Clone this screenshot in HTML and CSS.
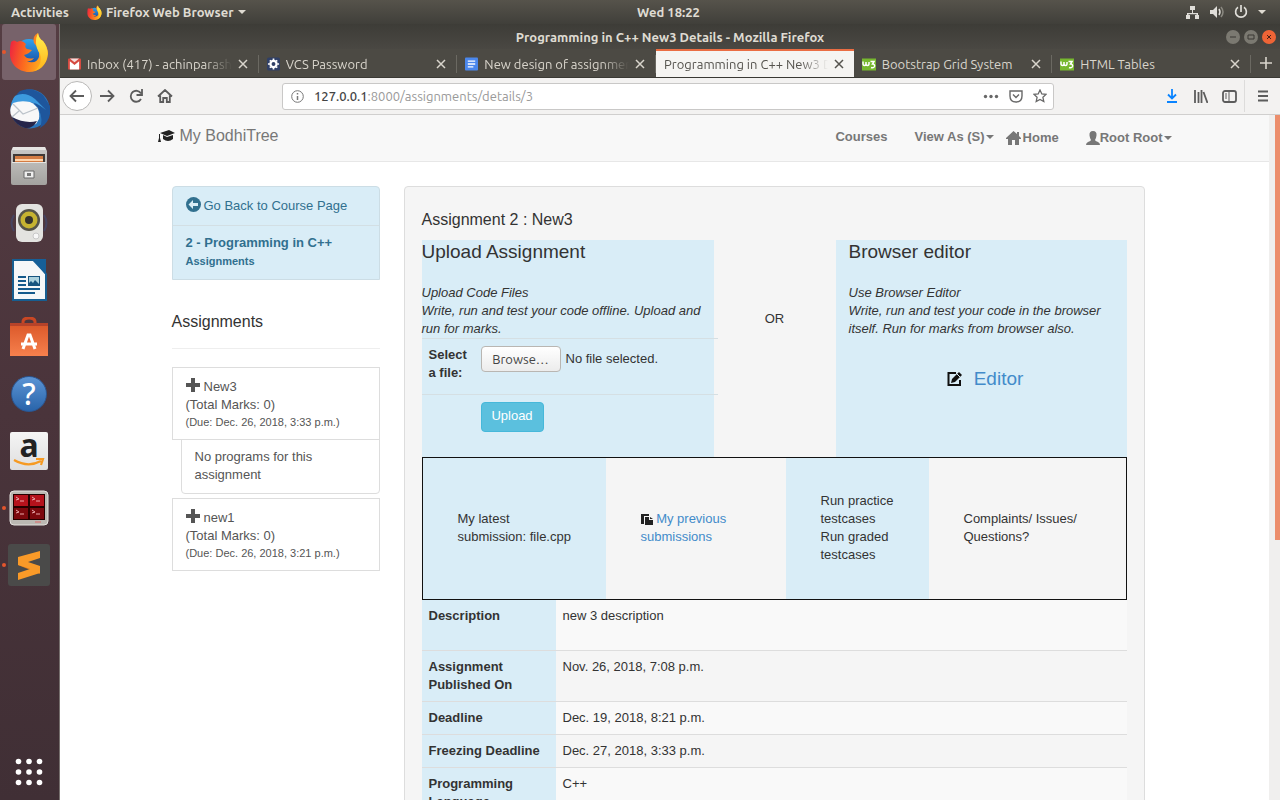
FILE: index.html
```html
<!DOCTYPE html>
<html lang="en">
<head>
<meta charset="utf-8">
<title>Programming in C++ New3 Details - Mozilla Firefox</title>
<link rel="stylesheet" href="styles.css">
</head>
<body>
<svg class="defs" aria-hidden="true">
  <defs>
    <linearGradient id="fire" x1="0" y1=".3" x2="1" y2=".5"><stop offset="0" stop-color="#ee2440"/><stop offset=".4" stop-color="#fb6520"/><stop offset="1" stop-color="#ffbf1c"/></linearGradient>
    <linearGradient id="flame" x1="0" y1="0" x2="0" y2="1"><stop offset="0" stop-color="#fff050"/><stop offset="1" stop-color="#ffb31a"/></linearGradient>
    <linearGradient id="blue" x1="0" y1="0" x2="0" y2="1"><stop offset="0" stop-color="#2fa2ed"/><stop offset="1" stop-color="#18469c"/></linearGradient>
    <linearGradient id="silver" x1="0" y1="0" x2="0" y2="1"><stop offset="0" stop-color="#cbcac8"/><stop offset="1" stop-color="#a3a29f"/></linearGradient>
    <linearGradient id="orange" x1="0" y1="0" x2="0" y2="1"><stop offset="0" stop-color="#dd5b2c"/><stop offset="1" stop-color="#f6804d"/></linearGradient>
    <symbol id="firefox" viewBox="0 0 40 40">
      <circle cx="20" cy="21" r="14" fill="url(#blue)"/>
      <path d="M2 10Q5 7 8 10Q13 7 17 12Q15 15 18 17L23 18Q20 22 15 23Q18 28 25 26Q22 30 17 29Q27 33 30 25Q31 17 25 11Q23 4 29 1Q30 7 34 9Q39 15 39 22C38 33 30 40 20 40C9 40 0 31 1 20Q1 14 2 10Z" fill="url(#fire)"/>
      <path d="M29 1Q30 7 34 9Q41 18 37 29Q33 37 25 39Q34 33 31 22Q24 12 29 1Z" fill="url(#flame)"/>
    </symbol>
    <symbol id="w3" viewBox="0 0 14 14"><path fill="#77b82f" d="M0 1h14v12H0z"/><path d="M1 4v2q0 2 1.500 2T4 6V4.500V6q0 2 1.500 2T7 6V4.500M8.500 4H12L10.500 6.500Q13 6.500 12.500 9Q11.500 11 9 10" fill="none" stroke="#fff" stroke-width="1.500"/></symbol>
    <symbol id="x" viewBox="0 0 10 10"><path d="M1 1l8 8M9 1L1 9" stroke="currentColor" stroke-width="1.500" fill="none"/></symbol>
    <symbol id="plus" viewBox="0 0 14 14"><path d="M5 0h4v5h5v4H9v5H5V9H0V5h5z" fill="currentColor"/></symbol>
  </defs>
</svg>

<header class="topbar">
  <div class="topbar-left">
    <span>Activities</span>
    <span class="app-menu"><svg width="15" height="15"><use href="#firefox"/></svg>Firefox Web Browser <i class="caret"></i></span>
  </div>
  <time>Wed 18:22</time>
  <div class="topbar-right">
    <svg width="15" height="15" viewBox="0 0 15 15" fill="#e0ded9"><path d="M5 1h5v4H8v3h5v2h1v4h-4v-4h1.500v-.8h-8V10H5v4H1v-4h1V8h5V5H5z"/></svg>
    <svg width="14" height="14" viewBox="0 0 14 14"><path d="M0 5h3l4-4v12L3 9H0z" fill="#e0ded9"/><path d="M9 4q2 3 0 6" stroke="#e0ded9" stroke-width="1.500" fill="none"/><path d="M11 2q4 5 0 10" stroke="#8a8880" stroke-width="1.500" fill="none"/></svg>
    <svg width="14" height="14" viewBox="0 0 14 14" fill="none" stroke="#e0ded9" stroke-width="1.700"><path d="M4 2.300a5.400 5.400 0 1 0 6 0M7 0v7"/></svg>
    <i class="caret"></i>
  </div>
</header>

<div class="desktop">
  <nav class="dock" aria-label="Dock">
    <a href="#" class="dock-item running current" aria-label="Firefox"><svg width="40" height="40"><use href="#firefox"/></svg></a>
    <a href="#" class="dock-item" aria-label="Thunderbird"><svg width="42" height="42" viewBox="0 0 42 42"><circle cx="22" cy="21" r="19.500" fill="#2a76bd"/><path d="M12 3Q24-2 35 7L42 18Q44 33 32 40Q37 26 25 14Q19 8 8 9Q9 5 12 3Z" fill="#1e569c"/><path d="M7 8Q17 3 27 11L38 22Q27 12 14 14Q7 16 3 22Q3 12 7 8Z" fill="#3c9ade"/><path d="M5 15Q13 12 22 14Q33 19 31 31L28 36Q18 40 4 29Q0 22 5 15Z" fill="#f8f8f8"/><path d="M5 16L15 26L30 20M4 29L11 23" fill="none" stroke="#bcc3ca" stroke-width="1.300"/><path d="M4 29Q17 36 29 33Q25 41 17 40Q8 37 4 29Z" fill="#26254a"/></svg></a>
    <a href="#" class="dock-item" aria-label="Files"><svg width="38" height="40" viewBox="0 0 38 40"><path d="M3 1h32l2 4v32q0 2-2 2H3q-2 0-2-2V5z" fill="url(#silver)"/><path d="M3 1h32l1 3H2z" fill="#e6e5e3"/><path d="M3 8h32v9H3z" fill="#413b38"/><path d="M5 10h28v7H5z" fill="#d47c43"/><path d="M5 13h28v2H5z" fill="#ffd5ac"/><path d="M2 16h34v1H2z" fill="#e6e5e3"/><path d="M14 25h10v7H14z" fill="#eee" stroke="#686868"/><path d="M17 27h4v3h-4z" fill="#777"/></svg></a>
    <a href="#" class="dock-item" aria-label="Rhythmbox"><svg width="40" height="40" viewBox="0 0 40 40"><path d="M5 12Q0 20 5 28M35 12Q40 20 35 28" stroke="#464460" stroke-width="2" fill="none"/><rect x="7" y="1" width="27" height="38" rx="6" fill="#e3e3e0"/><circle cx="20" cy="17" r="11" fill="#55544a"/><circle cx="20" cy="17" r="8.500" fill="#c5b331"/><circle cx="20" cy="17" r="4" fill="#34332d"/><circle cx="27" cy="33" r="3" fill="#f7f7f7" stroke="#c8c8c8"/></svg></a>
    <a href="#" class="dock-item" aria-label="LibreOffice Writer"><svg width="36" height="42" viewBox="0 0 36 42"><path d="M2 1h22l11 14v26H2z" fill="#f6f7f8" stroke="#175e91" stroke-width="2"/><path d="M20 0h15v16z" fill="#165f98"/><path d="M7 17h8v2H7zm0 4h8v2H7zm0 4h8v2H7zm0 4h22v2H7zm0 4h17v2H7z" fill="#155a8c"/><path d="M17 17h12v10H17z" fill="#17547f"/><path d="M18 18h10v7l-4-4-2 3-2-2-2 2z" fill="#acd1dd"/></svg></a>
    <a href="#" class="dock-item" aria-label="Ubuntu Software"><svg width="38" height="40" viewBox="0 0 38 40"><path d="M13 9V5q0-4 6-4t6 4v4" fill="none" stroke="#c94724" stroke-width="3"/><path d="M0 6h38v4H0z" fill="#b6432a"/><path d="M0 9h38v30H0z" fill="url(#orange)"/><path d="M13 32l5-14h2l5 14M11 27h16" stroke="#fff" stroke-width="3" fill="none"/></svg></a>
    <a href="#" class="dock-item help" aria-label="Help"><span>?</span></a>
    <a href="#" class="dock-item amazon" aria-label="Amazon"><span>a<svg width="32" height="10" viewBox="0 0 32 10"><path d="M1 2Q15 10 28 3M23 1l7 0-2 6" fill="none" stroke="#f69a22" stroke-width="2.200"/></svg></span></a>
    <a href="#" class="dock-item running" aria-label="Terminator"><svg width="40" height="36" viewBox="0 0 40 36"><rect x="1" y="1" width="38" height="34" rx="4" fill="#bbb8b2" stroke="#e4e2de"/><path d="M4 4h32v26H4z" fill="#260000"/><path d="M5 5h14v11H5zm16 0h14v11H21z" fill="#b5121c"/><path d="M5 18h14v11H5zm16 0h14v11H21z" fill="#7c080d"/><path d="M7 7l3 2-3 1M11 11h4M23 7l3 2-3 1M27 11h4M7 20l3 2-3 1M11 24h4M23 20l3 2-3 1M27 24h4" fill="none" stroke="#e9a9ab"/><path d="M26 32h6" stroke="#d66"/></svg></a>
    <a href="#" class="dock-item running" aria-label="Sublime Text"><svg width="42" height="42" viewBox="0 0 42 42"><rect width="42" height="42" rx="3" fill="#4a4a49"/><path d="M10 21l9-2 13 5v6z" fill="#ce7119"/><path d="M10 13L32 7v7l-12 4 12 4v7L10 36v-7l12-4-12-4z" fill="#f99a28"/></svg></a>
    <a href="#" class="dock-item apps" aria-label="Show Applications"><svg width="28" height="28" viewBox="0 0 28 28" fill="#fff"><circle cx="3.500" cy="3.500" r="2.800"/><circle cx="14" cy="3.500" r="2.800"/><circle cx="24.500" cy="3.500" r="2.800"/><circle cx="3.500" cy="14" r="2.800"/><circle cx="14" cy="14" r="2.800"/><circle cx="24.500" cy="14" r="2.800"/><circle cx="3.500" cy="24.500" r="2.800"/><circle cx="14" cy="24.500" r="2.800"/><circle cx="24.500" cy="24.500" r="2.800"/></svg></a>
  </nav>

  <div class="window">
    <div class="titlebar">
      <span class="title">Programming in C++ New3 Details - Mozilla Firefox</span>
      <div class="window-buttons">
        <button aria-label="Minimize"><svg width="8" height="8" viewBox="0 0 8 8"><path d="M1 4h6" stroke="#3a3935"/></svg></button>
        <button aria-label="Maximize"><svg width="8" height="8" viewBox="0 0 8 8"><path d="M1 2h6v4H1z" stroke="#3a3935" fill="none"/></svg></button>
        <button class="close" aria-label="Close"><svg width="8" height="8" viewBox="0 0 8 8"><path d="M2 2l4 4M6 2L2 6" stroke="#4b2015"/></svg></button>
      </div>
    </div>
    <div class="tabs">
      <div class="tab"><svg width="13" height="14" viewBox="0 0 14 14"><rect y="1" width="14" height="12" rx="1" fill="#d64a40"/><path d="M2 13V4l5 4 5-4v9z" fill="#fff"/><path d="M2 1h10L7 5z" fill="#f4dedc"/></svg><span class="label">Inbox (417) - achinparashar</span><button aria-label="Close tab"><svg width="10" height="10"><use href="#x"/></svg></button></div>
      <div class="tab"><svg width="13" height="14" viewBox="0 0 14 14"><rect width="14" height="14" rx="2" fill="#2f3f66"/><circle cx="7" cy="7" r="3.300" fill="none" stroke="#fff" stroke-width="2.400"/><path d="M7 1v2M7 11v2M1 7h2M11 7h2M3 3l1 1M10 10l1 1M11 3l-1 1M3 11l1-1" stroke="#fff" stroke-width="1.800"/></svg><span class="label">VCS Password</span><button aria-label="Close tab"><svg width="10" height="10"><use href="#x"/></svg></button></div>
      <div class="tab"><svg width="13" height="14" viewBox="0 0 14 14"><rect width="14" height="14" rx="1" fill="#4b87ec"/><path d="M3 4h8M3 7h8M3 10h6" stroke="#fff" stroke-width="1.400"/></svg><span class="label">New design of assignments</span><button aria-label="Close tab"><svg width="10" height="10"><use href="#x"/></svg></button></div>
      <div class="tab active"><span class="label">Programming in C++ New3 Details</span><button aria-label="Close tab"><svg width="10" height="10"><use href="#x"/></svg></button></div>
      <div class="tab"><svg width="14" height="15"><use href="#w3"/></svg><span class="label short">Bootstrap Grid System</span><button aria-label="Close tab"><svg width="10" height="10"><use href="#x"/></svg></button></div>
      <div class="tab"><svg width="14" height="15"><use href="#w3"/></svg><span class="label short">HTML Tables</span><button aria-label="Close tab"><svg width="10" height="10"><use href="#x"/></svg></button></div>
      <button class="new-tab" aria-label="New tab"><svg width="12" height="12" viewBox="0 0 12 12"><path d="M6 0v12M0 6h12" stroke="currentColor" stroke-width="1.600"/></svg></button>
    </div>
    <div class="toolbar">
      <div class="tools nav-tools">
        <button class="back" aria-label="Back"><svg width="16" height="14" viewBox="0 0 16 14"><path d="M15 7H2M7 1.500L1.500 7L7 12.500"/></svg></button>
        <button aria-label="Forward"><svg width="16" height="14" viewBox="0 0 16 14"><path d="M1 7h13M9 1.500L14.500 7L9 12.500"/></svg></button>
        <button aria-label="Reload"><svg width="14" height="14" viewBox="0 0 14 14"><path d="M12 4.500A5.500 5.500 0 1 0 12 10M13 0v6H7.500"/></svg></button>
        <button aria-label="Home"><svg width="16" height="14" viewBox="0 0 16 14"><path d="M1 7.500L8 1l7 6.500M3.200 6.500V13h3V9h3.600v4h3V6.500"/></svg></button>
      </div>
      <div class="address">
        <svg width="13" height="13" viewBox="0 0 13 13" fill="none" stroke="#777"><circle cx="6.500" cy="6.500" r="5.800"/><path d="M6.500 6v4M6.500 3v1.500" stroke-width="1.500"/></svg>
        <span class="url"><b>127.0.0.1</b>:8000/assignments/details/3</span>
        <svg width="16" height="5" viewBox="0 0 16 5" fill="#686868"><circle cx="2.500" cy="2.500" r="1.700"/><circle cx="8" cy="2.500" r="1.700"/><circle cx="13.500" cy="2.500" r="1.700"/></svg>
        <svg width="14" height="13" viewBox="0 0 14 13" fill="none" stroke="#686868" stroke-width="1.400"><path d="M1 1h12v5q0 6-6 6t-6-6zM4 4.500l3 3 3-3"/></svg>
        <svg width="14" height="14" viewBox="0 0 14 14" fill="none" stroke="#686868" stroke-width="1.300"><path d="M7 1l1.800 3.900 4.200.5-3.100 2.900.9 4.300L7 10.500l-3.800 2.100.9-4.300L1 5.400l4.200-.5z"/></svg>
      </div>
      <div class="tools side-tools">
        <button class="download" aria-label="Downloads"><svg width="12" height="14" viewBox="0 0 12 14"><path d="M6 0v9M2 5.500l4 4 4-4M1 13h10"/></svg></button>
        <button aria-label="Library"><svg width="14" height="13" viewBox="0 0 14 13"><path d="M1 0v13M4.500 2v11M7.500 0v13M9.500 2l4 11"/></svg></button>
        <button aria-label="Sidebar"><svg width="15" height="13" viewBox="0 0 15 13"><rect x="1" y="1" width="13" height="11" rx="2"/><path d="M7 1v11M3 4h2M3 6h2M3 8h2" stroke-width="1"/></svg></button>
        <button class="menu" aria-label="Menu"><svg width="12" height="12" viewBox="0 0 12 12"><path d="M1 1.500h10M1 6h10M1 10.500h10"/></svg></button>
      </div>
    </div>

    <div class="viewport">
      <div class="page">
        <div class="navbar">
          <div class="container nav-row">
            <a href="#" class="brand"><svg width="17" height="13" viewBox="0 0 17 13" fill="#222"><path d="M2 3L11 0l6 3-8 3zM5 5l4 2 6-2v4q-5 4-10 0zM1 4h1v4l1 4H0l1-4z"/></svg>My BodhiTree</a>
            <nav class="site-links">
              <a href="#" class="courses">Courses</a>
              <a href="#">View As (S)<i class="caret"></i></a>
              <a href="#" class="home"><svg width="15" height="14" viewBox="0 0 15 14" fill="currentColor"><path d="M7.500 0L11 3V1h2v4l2 2v1h-2v6H9V9H6v5H2V8H0V7z"/></svg>Home</a>
              <a href="#" class="user"><svg width="14" height="14" viewBox="0 0 14 14" fill="currentColor"><path d="M7 0q4 0 3.500 4.500Q10 8 9 9q0 1 3 2 2 1 2 3H0q0-2 2-3 3-1 3-2Q4 8 3.500 4.500Q3 0 7 0z"/></svg>Root Root<i class="caret"></i></a>
            </nav>
          </div>
        </div>
        <div class="container columns">
          <aside class="sidebar">
            <div class="course-nav">
              <a href="#"><svg width="15" height="15" viewBox="0 0 15 15"><circle cx="7.500" cy="7.500" r="7.500" fill="currentColor"/><path d="M2.500 7.500L7 3v3h5v3H7v3z" fill="#d9edf7"/></svg>Go Back to Course Page</a>
              <a href="#" class="course"><b>2 - Programming in C++</b><small>Assignments</small></a>
            </div>
            <h4>Assignments</h4>
            <a href="#" class="card"><span><svg width="14" height="14"><use href="#plus"/></svg>New3</span><span>(Total Marks: 0)</span><small>(Due: Dec. 26, 2018, 3:33 p.m.)</small></a>
            <div class="programs">No programs for this assignment</div>
            <a href="#" class="card"><span><svg width="14" height="14"><use href="#plus"/></svg>new1</span><span>(Total Marks: 0)</span><small>(Due: Dec. 26, 2018, 3:21 p.m.)</small></a>
          </aside>
          <main class="panel">
            <h4>Assignment 2 : New3</h4>
            <div class="methods">
              <section class="upload">
                <h3>Upload Assignment</h3>
                <p>Upload Code Files<br>Write, run and test your code offline. Upload and run for marks.</p>
                <form>
                  <div class="form-row">
                    <label class="field-name" for="code-file">Select a file:</label>
                    <div class="picker">
                      <input type="file" id="code-file">
                      <label class="browse" for="code-file">Browse…</label>
                      <span>No file selected.</span>
                    </div>
                  </div>
                  <div class="form-row submit-row"><button type="submit">Upload</button></div>
                </form>
              </section>
              <div class="or">OR</div>
              <section class="editor">
                <h3>Browser editor</h3>
                <p>Use Browser Editor<br>Write, run and test your code in the browser itself. Run for marks from browser also.</p>
                <div class="editor-link"><svg width="15" height="14" viewBox="0 0 15 14"><path d="M9 1H1.500v12H13V8" fill="none" stroke="#111" stroke-width="2"/><path d="M4 11l1-4 7-7 3 3-7 7z" fill="#111"/><path d="M10 2l3 3" stroke="#d9edf7"/></svg><a href="#">Editor</a></div>
              </section>
            </div>
            <div class="summary">
              <div>My latest submission: file.cpp</div>
              <div><svg width="12" height="11" viewBox="0 0 12 11"><path d="M0 0h8v2H3v8H0zM4 3h4v3h4v5H4z" fill="#222"/><path d="M9 3l3 2H9z" fill="#222"/></svg> <a href="#">My previous submissions</a></div>
              <div>Run practice testcases<br>Run graded testcases</div>
              <div>Complaints/ Issues/ Questions?</div>
            </div>
            <table class="details">
              <tbody>
                <tr class="description"><th scope="row">Description</th><td>new 3 description</td></tr>
                <tr><th scope="row">Assignment Published On</th><td>Nov. 26, 2018, 7:08 p.m.</td></tr>
                <tr><th scope="row">Deadline</th><td>Dec. 19, 2018, 8:21 p.m.</td></tr>
                <tr><th scope="row">Freezing Deadline</th><td>Dec. 27, 2018, 3:33 p.m.</td></tr>
                <tr><th scope="row">Programming Language</th><td>C++</td></tr>
              </tbody>
            </table>
          </main>
        </div>
      </div>
      <div class="scrollbar"><div class="thumb"></div></div>
    </div>
  </div>
</div>
</body>
</html>
```
FILE: styles.css
```css
* { box-sizing: border-box; }
body {
  margin: 0;
  height: 100vh;
  display: flex;
  flex-direction: column;
  overflow: hidden;
  font: 13px/18px "Liberation Sans", Arial, sans-serif;
  color: #333;
}
svg { flex: none; }
button { font: inherit; padding: 0; border: 0; background: none; color: inherit; }
a { color: #428bca; text-decoration: none; }
h3, h4, p { margin: 0; font-weight: 400; }
.defs { position: absolute; width: 0; height: 0; }
.caret {
  display: inline-block;
  border: 4px solid transparent;
  border-top-color: currentColor;
  border-bottom: 0;
}

/* Shell */
.topbar {
  flex: none;
  height: 24px;
  padding: 0 14px 0 11px;
  display: grid;
  grid-template-columns: 1fr auto 1fr;
  align-items: center;
  background: linear-gradient(#56534b, #403f3a);
  color: #dfdbd2;
  font: bold 13px/24px "Ubuntu", "Noto Sans", sans-serif;
}
.topbar-left, .topbar-right, .app-menu { display: flex; align-items: center; }
.topbar-left { gap: 18px; }
.app-menu { gap: 4px; }
.topbar time { margin-left: 60px; }
.topbar-right { justify-content: flex-end; gap: 10px; }
.desktop { flex: 1; min-height: 0; display: flex; }
.dock {
  flex: none;
  width: 60px;
  padding: 0 3px 0 2px;
  display: flex;
  flex-direction: column;
  gap: 1px;
  background: linear-gradient(#553d43, #4a343b 50%, #402f35);
  border-right: 1px solid #77706e;
}
.dock-item {
  position: relative;
  height: 56px;
  display: flex;
  align-items: center;
  justify-content: center;
  border-radius: 3px;
}
.current { background: #77626a; }
.running::before {
  content: "";
  position: absolute;
  left: 0;
  top: 26px;
  width: 4px;
  height: 4px;
  border-radius: 50%;
  background: #e4562d;
}
.help span {
  width: 36px;
  height: 36px;
  border-radius: 50%;
  background: linear-gradient(#5c94d4, #2964aa);
  border: 1px solid #2a5794;
  color: #fff;
  text-align: center;
  font: 500 30px/33px "Noto Sans", sans-serif;
}
.amazon span {
  width: 38px;
  height: 38px;
  display: flex;
  flex-direction: column;
  align-items: center;
  background: linear-gradient(#f5f5f5, #dedede);
  border-radius: 2px;
  color: #222;
  font: bold 32px/26px "Noto Sans", sans-serif;
}
.apps { margin-top: auto; }
.window { flex: 1; min-width: 0; display: flex; flex-direction: column; font-family: "Ubuntu", "Noto Sans", sans-serif; }
.titlebar {
  height: 25px;
  padding-right: 4px;
  display: flex;
  align-items: center;
  background: linear-gradient(#3d3c37, #4a4843);
  color: #dfdbd2;
  font-weight: bold;
}
.title { flex: 1; text-align: center; padding-left: 54px; }
.window-buttons { display: flex; gap: 4px; }
.window-buttons button {
  width: 14px;
  height: 14px;
  border-radius: 50%;
  display: grid;
  place-items: center;
  background: #7b7971;
}
.window-buttons .close { background: #ee6436; }
.tabs {
  height: 29px;
  display: flex;
  background: #4c4a44;
  color: #d9d5cc;
  border-bottom: 1px solid #3a3934;
}
.tab {
  flex: 1 1 0;
  min-width: 0;
  display: flex;
  align-items: center;
  gap: 6px;
  padding: 0 10px 0 8px;
  border-top: 2px solid transparent;
  border-right: 1px solid transparent;
  border-image: linear-gradient(transparent 15%, #6b6962 15%, #6b6962 85%, transparent 85%) 0 1;
}
.tab .label {
  flex: 1;
  white-space: nowrap;
  overflow: hidden;
  mask-image: linear-gradient(to right, #000 calc(100% - 28px), transparent);
}
.tab .short { mask-image: none; }
.tab button { display: flex; }
.tab.active { border-image: none; border-color: #ea6d43; border-right: 0; background: #f5f4f2; color: #55534e; }
.new-tab { width: 29px; display: grid; place-items: center; }
.toolbar {
  height: 37px;
  padding-left: 2px;
  display: flex;
  align-items: center;
  background: #f3f2f1;
  border-bottom: 1px solid #d0cfce;
  color: #5c5c5c;
}
.tools { display: flex; align-items: center; }
.tools svg { fill: none; stroke: currentColor; stroke-width: 1.8; }
.tools button { width: 29px; height: 30px; display: grid; place-items: center; }
.tools .back { width: 30px; border: 1px solid #b9b8b7; border-radius: 50%; background: #fff; }
.tools .download { color: #0a84ff; }
.tools .menu { border-left: 1px solid #dddcdb; width: 36px; height: 32px; }
.side-tools { margin-left: auto; }
.address {
  width: 772px;
  height: 27px;
  margin-left: 103px;
  padding: 0 6px 0 8px;
  display: flex;
  align-items: center;
  gap: 10px;
  background: #fff;
  border: 1px solid #c9c8c7;
  border-radius: 3px;
}
.url { flex: 1; color: #999; }
.url b { color: #444; font-weight: 500; }

/* Site */
.viewport { flex: 1; min-height: 0; display: flex; background: #fff; font-family: "Liberation Sans", Arial, sans-serif; }
.page { flex: 1; overflow: hidden; }
.scrollbar { width: 11px; padding-left: 6px; background: #f0efee; }
.thumb { height: 62%; background: #ec8e6c; }
.container { max-width: 1040px; margin: 0 auto; }
.navbar { background: #f8f8f8; border-bottom: 1px solid #e7e7e7; }
.nav-row { height: 46px; padding: 0 13px; display: flex; justify-content: space-between; align-items: center; }
.navbar a { color: #777; }
.brand { display: flex; align-items: center; gap: 5px; font-size: 16px; padding-bottom: 4px; }
.site-links { display: flex; align-items: center; font-weight: bold; }
.site-links a { display: flex; align-items: center; padding-bottom: 2px; }
.site-links .courses { margin-right: 27px; }
.site-links .home { margin: 0 27px 0 12px; padding: 0; gap: 2px; }
.site-links .user { padding: 0; }
.site-links .caret { margin-left: 1px; }
.columns { padding: 24px 40px 0 27px; display: flex; align-items: flex-start; gap: 24px; }
.sidebar { flex: none; width: 208px; }
.course-nav { border: 1px solid #ccdde5; border-radius: 4px 4px 0 0; background: #d9edf7; }
.course-nav a { display: flex; gap: 3px; padding: 10px 13px; color: #31708f; }
.course-nav .course { flex-direction: column; gap: 0; padding: 8px 13px 9px; border-top: 1px solid #d3dfe4; }
.course small { font-size: 11px; font-weight: bold; }
.sidebar h4 { padding: 33px 0 17px; margin-bottom: 18px; font-size: 16px; border-bottom: 1px solid #eee; }
.card { display: flex; flex-direction: column; padding: 10px 13px 9px; border: 1px solid #ddd; color: #555; }
.card span { display: flex; gap: 4px; }
.card small { font-size: 11px; line-height: 16px; }
.programs { margin: -1px 0 4px 9px; padding: 8px 13px 9px; border: 1px solid #ddd; border-radius: 0 0 4px 4px; color: #555; }
.panel { flex: 1; min-width: 0; padding: 17px; background: #f5f5f5; border: 1px solid #ddd; border-radius: 4px; }
.panel h4 { font-size: 16px; padding: 7px 0 11px; }
.methods { display: grid; grid-template-columns: minmax(0, 292fr) minmax(0, 122fr) minmax(0, 291fr); min-height: 217px; }
.panel h3 { font-size: 19px; line-height: 24px; padding-bottom: 20px; }
.panel p { font-style: italic; }
.upload { background: #d9edf7; }
.or { padding-top: 70px; text-align: center; }
.editor { padding: 0 13px; background: #d9edf7; }
.upload form { margin-right: -4px; }
.form-row { display: flex; min-height: 56px; border-top: 1px solid #d5dfe3; padding: 7px; }
.field-name { width: 52px; padding-right: 8px; font-weight: bold; }
.picker { position: relative; display: flex; gap: 5px; align-items: center; align-self: flex-start; }
.picker input { position: absolute; opacity: 0; width: 80px; height: 25px; }
.browse {
  width: 80px;
  height: 26px;
  border: 1px solid #b9b6b2;
  border-radius: 4px;
  background: linear-gradient(#fff, #ececec);
  text-align: center;
  font: 13px/24px "Ubuntu", "Noto Sans", sans-serif;
  color: #444;
}
.submit-row { padding-left: 59px; }
.submit-row button { width: 63px; height: 30px; border: 1px solid #46b8da; border-radius: 4px; background: #5bc0de; color: #fff; padding-bottom: 3px; }
.editor-link { padding: 29px 0 0 8px; display: flex; align-items: center; justify-content: center; gap: 12px; font-size: 19px; line-height: 24px; }
.summary { display: grid; grid-template-columns: 183fr 180fr 143fr 197fr; min-height: 143px; border: 1px solid #111; }
.summary > div { padding: 33px 30px 35px 35px; align-content: center; }
.summary > div:nth-child(odd) { background: #d9edf7; }
.summary > div:nth-child(4) { padding-right: 35px; }
.summary svg { vertical-align: -2px; }
.details { width: 100%; border-collapse: collapse; }
.details th, .details td { padding: 7px; vertical-align: top; text-align: left; border-bottom: 1px solid #ddd; }
.details th { width: 134px; background: #d9edf7; }
.details tr:nth-child(odd) td { background: #f9f9f9; }
.details .description { height: 50px; }
```
